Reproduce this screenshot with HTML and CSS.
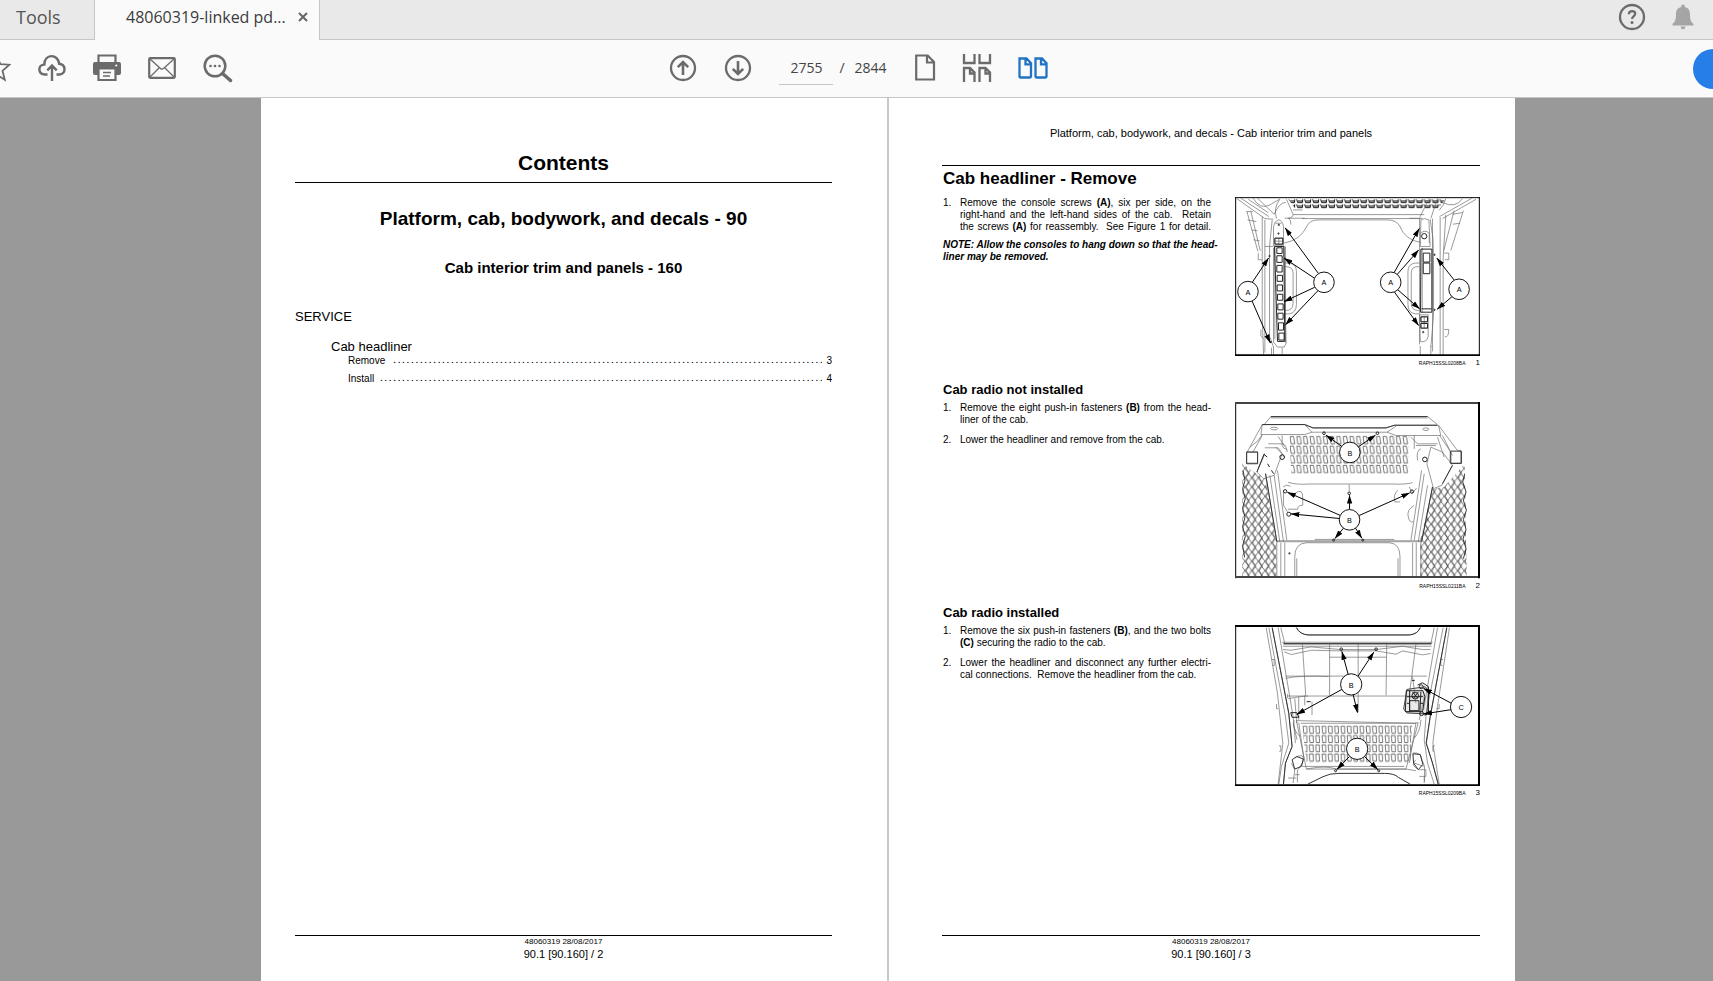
FILE: index.html
```html
<!DOCTYPE html>
<html lang="en">
<head>
<meta charset="utf-8">
<title>48060319-linked pdf</title>
<link rel="stylesheet" href="styles.css">
</head>
<body>
<header class="tabs">
  <button class="tab tools" type="button">Tools</button>
  <div class="tab active"><span>48060319-linked pd...</span>
    <button class="icon close" type="button" aria-label="Close tab"><svg width="10" height="10" viewBox="0 0 10 10"><path d="M1 1l8 8M9 1l-8 8" stroke="#666" stroke-width="2"/></svg></button>
  </div>
  <div class="tab-rest">
    <button class="icon" type="button" aria-label="Help"><svg width="28" height="28" viewBox="0 0 28 28" fill="none" stroke="#6b6b6b"><circle cx="14" cy="14" r="12" stroke-width="2.3"/><path d="M10.800 11.200c.2-4.200 6.500-4 6.400-.4 0 2.300-3 2.300-3.100 5.200" stroke-width="2.300"/><circle cx="14" cy="19.600" r="1.500" fill="#6b6b6b" stroke="none"/></svg></button>
    <button class="icon" type="button" aria-label="Notifications"><svg width="24" height="28" viewBox="0 0 24 28" fill="#a5a5a5"><path d="M10.300 4V2.500q1.700-2 3.400 0V4c4 .9 5.300 3.500 5.300 7.500 0 5 .8 7 3.500 9.500v1.500h-21V21C4.200 18.500 5 16.500 5 11.500 5 7.500 6.300 4.900 10.300 4zM9.500 23.500h5q-.5 2.800-2.500 2.800t-2.500-2.800z"/></svg></button>
  </div>
</header>
<nav class="toolbar" aria-label="Document">
  <div class="group left">
    <button class="icon" type="button" aria-label="Star"><svg width="11" height="30" viewBox="1 0 11 30" fill="none" stroke="#6b6b6b" stroke-width="1.800"><path d="M-2 3l3.300 8.200 9.200.500-7 6 2.300 9.100L-2 21.800"/></svg></button>
    <button class="icon" type="button" aria-label="Upload"><svg width="28" height="30" viewBox="0 0 28 30" fill="none" stroke="#6b6b6b" stroke-width="2.400"><path d="M9.500 21.500H7C-.5 21-.3 11.800 6.300 11.600 6.500.600 20 .400 21.200 10.800c7 .8 7 10.400.3 10.700h-3M14 28V13M9.300 17.300L14 12.500l4.700 4.800"/></svg></button>
    <button class="icon" type="button" aria-label="Print"><svg width="28" height="30" viewBox="0 0 28 30"><path d="M5.500 9V2.500h17V9" fill="none" stroke="#6b6b6b" stroke-width="2.200"/><path d="M2 9h24q2 0 2 2v9q0 2-2 2H2q-2 0-2-2v-9q0-2 2-2z" fill="#6b6b6b"/><circle cx="23.300" cy="12.500" r="1.100" fill="#fff"/><path d="M5.500 15.500h17V27h-17z" fill="#fafafa" stroke="#6b6b6b" stroke-width="2.200"/><path d="M10 19.500h8M10 23h7" stroke="#6b6b6b" stroke-width="1.400"/></svg></button>
    <button class="icon" type="button" aria-label="Email"><svg width="28" height="30" viewBox="0 0 28 30" fill="none" stroke="#6b6b6b"><rect x="1.200" y="5.200" width="25.600" height="19.600" rx="1" stroke-width="2.200"/><path d="M2 6l10.500 9.500q1.500 1.300 3 0L26 6M2 24l9-9M26 24l-9-9" stroke-width="1.300"/></svg></button>
    <button class="icon" type="button" aria-label="Find"><svg width="30" height="30" viewBox="0 0 30 30" fill="none" stroke="#6b6b6b"><circle cx="12" cy="13" r="10.300" stroke-width="2.500"/><path d="M19.500 20.500l8 7" stroke-width="3.500" stroke-linecap="round"/><g fill="#6b6b6b" stroke="none"><circle cx="7.500" cy="13" r="1.300"/><circle cx="12" cy="13" r="1.300"/><circle cx="16.500" cy="13" r="1.300"/></g></svg></button>
  </div>
  <div class="group center">
    <button class="icon" type="button" aria-label="Previous page"><svg width="28" height="30" viewBox="0 0 28 30" fill="none" stroke="#6b6b6b" stroke-width="2.300"><circle cx="14" cy="15" r="12"/><path d="M14 22V9M8.800 14.200L14 9l5.200 5.200" stroke-width="2.600"/></svg></button>
    <button class="icon" type="button" aria-label="Next page"><svg width="28" height="30" viewBox="0 0 28 30" fill="none" stroke="#6b6b6b" stroke-width="2.300"><circle cx="14" cy="15" r="12"/><path d="M14 8v13M8.800 15.800L14 21l5.200-5.200" stroke-width="2.600"/></svg></button>
    <div class="pager"><input type="text" value="2755" aria-label="Page number"><span class="slash">/</span><span>2844</span></div>
    <div class="views">
    <button class="icon" type="button" aria-label="Single page"><svg width="22" height="30" viewBox="0 0 22 30" fill="none" stroke="#6b6b6b" stroke-width="2.200"><path d="M2.200 2.500h11.500l6.300 6.500v17.500H2.200zM13 2.500V9.500h7"/></svg></button>
    <button class="icon" type="button" aria-label="Page scrolling"><svg width="30" height="30" viewBox="0 0 30 30" fill="none" stroke="#6b6b6b" stroke-width="2.300"><path d="M2 1v9h10.500V1M17.500 1v9H28V1M2 29V15h6l4.500 4.500V29M8 15v5.500h4.500M17.500 29V15h6l4.500 4.500V29M23.500 15v5.500H28"/></svg></button>
    <button class="icon" type="button" aria-label="Two page view"><svg width="30" height="30" viewBox="0 0 30 30" fill="none" stroke="#2173c5" stroke-width="2.300"><path d="M1.500 5.500h7l4.500 4.800v13.200q0 1-1 1H2.500q-1 0-1-1zM7.500 5.500v5.800H13M17.500 5.500h6.500l4.500 4.800v13.200q0 1-1 1H18.500q-1 0-1-1zM23 5.500v5.800h5.500"/></svg></button>
    </div>
  </div>
  <div class="group right"><button class="share" type="button" aria-label="Share"></button></div>
</nav>
<main class="viewer">
  <article class="page page-left">
    <h1 class="title">Contents</h1>
    <h2 class="chapter">Platform, cab, bodywork, and decals - 90</h2>
    <h3 class="subchapter">Cab interior trim and panels - 160</h3>
    <p class="service">SERVICE</p>
    <p class="topic">Cab headliner</p>
    <ul class="toc">
      <li><span>Remove</span><span class="dots">. . . . . . . . . . . . . . . . . . . . . . . . . . . . . . . . . . . . . . . . . . . . . . . . . . . . . . . . . . . . . . . . . . . . . . . . . . . . . . . . . . . . . . . . . . . . . . . . .</span><span>3</span></li>
      <li><span>Install</span><span class="dots">. . . . . . . . . . . . . . . . . . . . . . . . . . . . . . . . . . . . . . . . . . . . . . . . . . . . . . . . . . . . . . . . . . . . . . . . . . . . . . . . . . . . . . . . . . . . . . . . . . . .</span><span>4</span></li>
    </ul>
    <footer><small>48060319 28/08/2017</small><span>90.1 [90.160] / 2</span></footer>
  </article>
  <article class="page page-right">
    <p class="running">Platform, cab, bodywork, and decals - Cab interior trim and panels</p>
    <h2 class="heading">Cab headliner - Remove</h2>
    <section class="row">
      <div class="text">
        <ol><li><p><span class="full">Remove the console screws <b>(A)</b>, six per side, on the</span><span class="full">right-hand and the left-hand sides of the cab.&nbsp; Retain</span><span class="full">the screws <b>(A)</b> for reassembly.&nbsp; See Figure 1 for detail.</span></p></li></ol>
        <p class="note">NOTE: Allow the consoles to hang down so that the head-<br>liner may be removed.</p>
      </div>
      <figure>
        <svg class="drawing" viewBox="30 21 738 480">
          <defs>
            <marker id="arrow" markerUnits="userSpaceOnUse" markerWidth="26" markerHeight="18" refX="25" refY="9" orient="auto"><path d="M0 1L26 9 0 17z" fill="#000"/></marker>
            <pattern id="vent" width="24" height="15" patternUnits="userSpaceOnUse" x="190" y="27"><path d="M2 1l3 10h14l1-10M5 6h14" class="dark"/></pattern>
            <pattern id="slots" width="20" height="29" patternUnits="userSpaceOnUse" x="193" y="124"><path d="M3 4h10l4 22H6z" class="mid"/></pattern>
            <pattern id="slots-b" width="19" height="28" patternUnits="userSpaceOnUse" x="232" y="326"><path d="M3 3h11l1 21H5z" class="mid"/></pattern>
            <pattern id="mesh" width="20" height="28" patternUnits="userSpaceOnUse"><path d="M0 0l10 14L20 0M0 28l10-14 10 14M3 0l9 14-9 14" class="mid"/></pattern>
          </defs>
          <path fill="url(#vent)" d="M190 27H665L640 57H212z"/>
          <g class="thin">
            <path d="M36 26L120 86 145 88M48 25L132 80M85 25q20 35 50 20l30-18M70 28l60 40M98 25l50 48q15-35 35-36M165 28q-20 25-10 58M185 28l20 45q0 10-15 12M205 74H600M205 60h28M232 86H590M190 84q10 5 8 20M178 160q50-10 68-50 8-20 35-20h208q28 0 38 20 15 40 62 48"/>
            <path d="M66 65l33 120M78 65l28 118M68 90l26 5M80 120l18 3M86 150l18 3M64 65h20M100 190v20h12M108 420v20l8 8"/>
            <path d="M112 80v305l4 110M120 90v400M142 90l-8 80v270l12 33v22M146 174v284l12 15h20l6-10-6-294M150 170v280M182 170v290M140 475v21M172 475v21M160 90q-12 5-14 20v58h30v-58q-3-20-16-20zM152 100h18M150 145h24v18h-24zM150 154h24M162 145v18M120 170h25"/>
            <path d="M178 220h15q22 3 22 25v100q0 25-22 28h-10M178 231q27-3 27 20v90q0 23-25 22"/>
            <path d="M756 28L655 86M743 25L646 80M715 26q-20 30-60 12M640 25l-20 60M615 26l-28 55M665 26q-5 20-20 35M665 75l-8 130v290M648 82v413M625 86v400M586 85v380M594 174v195M618 88q12 60 10 120v170l-8 95M690 62l-31 120M718 62l-38 120M715 68l-30 5M708 100l-22 3M660 190h14v20h-12M660 420h14q0 25-12 22"/>
            <path d="M585 220h-12q-22 3-22 25v100q0 25 22 28h12M585 231q-24-3-24 20v90q0 23 24 22M590 90q10-8 24 0l4 80h-30zM590 130q12-12 25 0v30M586 376h26v65q-5 20-24 15zM590 382h20v15h-20zM590 402h20v14h-20zM600 382v34M588 470v27M620 470v27M555 85h40M180 85h60"/>
          </g>
          <g class="ink"><path d="M149 170h28l3 286h-22zM156 174h16v17h-16zM156 198h16v20h-16zM156 227h16v20h-16zM157 257h16v18h-16zM157 286h16v18h-16zM158 314h16v18h-16zM159 343h16v18h-16zM159 371h16v18h-16zM161 400h15v22h-15zM162 431h16v21h-16zM590 178h33v190h-34zM597 190h20v27h-20zM597 220h20v32h-20zM592 358h30M590 382h20v15h-20zM590 402h20v14h-20zM150 145h24v18h-24z"/><circle cx="161" cy="131" r="2"/><circle cx="162" cy="105" r="2"/><circle cx="597" cy="428" r="2"/><circle cx="134" cy="199" r="2"/><circle cx="138" cy="458" r="2"/><circle cx="631" cy="195" r="2"/><circle cx="631" cy="361" r="2"/><circle cx="600" cy="139" r="8"/></g>
          <g class="leader"><path d="M82 278L131 205"/><path d="M80 331L136 460"/><path d="M281 251L181 114"/><path d="M270 266L178 205"/><path d="M270 293L178 336"/><path d="M280 303L182 406"/><path d="M509 249L585 116"/><path d="M518 255L583 181"/><path d="M520 300L586 358"/><path d="M510 307L583 408"/><path d="M690 271L638 205"/><path d="M684 321L639 359"/></g>
          <g class="ball"><circle cx="69" cy="306" r="31"/><circle cx="298" cy="278" r="31"/><circle cx="499" cy="278" r="31"/><circle cx="705" cy="299" r="31"/></g>
          <g class="tag"><text x="69" y="315">A</text><text x="298" y="287">A</text><text x="499" y="287">A</text><text x="705" y="308">A</text></g>
          <path class="frame" d="M32 21v480M30 23h738M766 21v480"/><path class="frame heavy" d="M30 498h738"/>
        </svg>
        <figcaption><small>RAPH15SSL0208BA</small><span>1</span></figcaption>
      </figure>
    </section>
    <h3 class="subheading">Cab radio not installed</h3>
    <section class="row">
      <div class="text">
        <ol>
          <li><p><span class="full">Remove the eight push-in fasteners <b>(B)</b> from the head-</span>liner of the cab.</p></li>
          <li><p>Lower the headliner and remove from the cab.</p></li>
        </ol>
      </div>
      <figure>
        <svg class="drawing" viewBox="30 24 738 531">
          <path fill="url(#slots)" d="M193 124H555l-2 116H200z"/>
          <path fill="url(#mesh)" d="M52 210L95 240 122 255 155 450V550H52zM722 210L660 280 625 285 588 440V550H728z"/>
          <g class="thin">
            <path d="M118 92L138 68H610L640 92M138 72H610M112 92H240l25 10H485l25-8H640M112 92L65 178v30h33v-34H65M240 92L262 115H488L515 97M112 92l-4 30H240l22-7M488 115l27 10H650L643 94M643 94L700 170h10v38h-32v-36l-32-48M75 160l25-20 12-18M84 175l28-50M130 150h45q10 5 12 25M120 162h40l20 30M160 128l20 30M172 125v30q2 10 15 12M560 130l20 20h60M575 155h60M590 165q-15 5-10 35M570 125v40M640 130l20 60M655 125l30 60"/>
            <path d="M118 180L96 235l20 20 32-10 24-65-20-20M100 225l20-45M620 160l-12 50 20 75 25-10 32-60-30-40z"/>
            <path d="M122 240L156 445H592L625 280M135 245L165 445M148 245L176 445M158 230L186 440M610 275L582 445M600 240L570 440M592 230L560 440M156 445v105M180 448v102M590 445v105M565 448v102M168 448v102M576 448v102"/>
            <path d="M190 266q25 8 65 5H500q45 2 65-4M374 273v20M175 280q10-10 22-2M176 290v45l12 20M210 300q25-20 24 15v20q-15 0-15 12h-30M520 290q-15 15-8 35h15M570 335q-24 15-18 35 3 18 15 15M555 280l10 18 12-15"/>
            <path d="M210 550v-60q0-40 35-42H495q32 2 32 42v60M216 550v-55M521 550v-55M155 442h435M270 438h240"/>
            <ellipse cx="148" cy="104" rx="11" ry="4"/><ellipse cx="605" cy="106" rx="9" ry="4"/>
          </g>
          <path class="edge" d="M65 175h33v35H65zM680 172h32v37h-32zM112 92H240l25 10H485l25-8H640M138 68H610M122 240L156 445M625 280L592 445M118 180l-22 55M655 270l30-55M54 230l6 30-7 25 8 30-8 28 7 28-7 28 8 30-8 28 6 35M722 240l-6 25 10 30-8 25 9 30-9 28 8 30-9 28 9 30-8 30"/>
          <g class="ink"><circle cx="298" cy="118" r="4"/><circle cx="459" cy="118" r="4"/><circle cx="172" cy="190" r="7"/><circle cx="602" cy="197" r="7"/><circle cx="181" cy="293" r="5"/><circle cx="563" cy="294" r="5"/><circle cx="192" cy="362" r="6"/><circle cx="374" cy="299" r="4"/><circle cx="327" cy="440" r="3"/><circle cx="415" cy="440" r="3"/><circle cx="194" cy="480" r="2"/><path d="M118 182l9 8M128 210l6 10M140 230l6 10"/></g>
          <g class="leader"><path d="M352 158L304 124"/><path d="M403 158L453 124"/><path d="M348 366L188 296"/><path d="M345 375L199 361"/><path d="M375 348V305"/><path d="M404 366L556 298"/><path d="M357 404L331 435"/><path d="M393 404L412 434"/></g>
          <g class="ball"><circle cx="376" cy="176" r="31"/><circle cx="375" cy="379" r="31"/></g>
          <g class="tag"><text x="376" y="186">B</text><text x="375" y="389">B</text></g>
          <path class="frame" d="M32 24v531"/><path class="frame heavy grey" d="M30 27h738M30 551h738"/><path class="frame heavy" d="M765 24v531"/>
        </svg>
        <figcaption><small>RAPH15SSL0211BA</small><span>2</span></figcaption>
      </figure>
    </section>
    <h3 class="subheading">Cab radio installed</h3>
    <section class="row">
      <div class="text">
        <ol>
          <li><p><span class="full">Remove the six push-in fasteners <b>(B)</b>, and the two bolts</span><b>(C)</b> securing the radio to the cab.</p></li>
          <li><p><span class="full">Lower the headliner and disconnect any further electri-</span>cal connections.&nbsp; Remove the headliner from the cab.</p></li>
        </ol>
      </div>
      <figure>
        <svg class="drawing" viewBox="30 24 738 486">
          <path fill="url(#slots-b)" d="M232 326H564l-6 112H246z"/>
          <g class="thin">
            <path d="M132 32L182 300 192 380 170 450 162 503M142 32L192 290 202 390 182 440 176 503M160 32L205 300 212 380M168 32L180 80M124 32L158 230 174 380 160 503M668 32L618 300 606 380 625 440 642 503M657 32L606 290 600 370 610 440 630 503M640 32L598 280M630 32L620 80M676 32L640 270 626 380 645 503"/>
            <path d="M215 32q10 20 35 22H555q25-2 33-22M172 76H625M176 82H622M174 88h448M174 98l25 2 60-10 90 8H455l80-10 60 10h24M178 105l22 8 60-13 88 2H455l60 10 20-10 60 12 24-4M182 178h426M182 185q40-10 130-6M188 238H600M190 246q40-8 60-8M188 232v12"/>
            <path d="M233 82L243 236M315 82V236M401 82V286M487 82L485 236M575 82L555 236M315 121H487M262 255v40M210 245l6 75M222 240v70M240 236v30M565 180l10 80M600 240l-15 70"/>
            <path d="M215 312L570 320 582 318M228 320H575M215 312L245 458H545L582 318M222 318L238 430M575 320L555 440M232 450H540M208 310q-5 30 18 50M205 320l12 50M590 310q-2 35-20 55M245 458q60-12 90 0H545l30 5"/>
            <path d="M210 425q30-20 25 10l-15 25M200 440l10 20-5 40M218 460v38M210 475h15M565 410q25-5 28 20l8 20v45M575 430q-18 15 5 28M585 460h20v20h-20M190 485h25M570 440l30 10M600 480v20"/>
            <path d="M140 128h8v18h-5M155 262v14h5M162 388h6v16h-5M657 128h-7v18h5M645 262v14h-8M632 388h-6v16h4"/>
          </g>
          <path class="edge" d="M215 32q10 20 35 22H555q25-2 33-22M176 80H622M250 503l45-22q20-10 45-10H480q30 0 42 12l35 20M668 32L618 300 606 380 625 440 642 503M142 32L192 290 202 390 182 440 176 503M202 430l14-10 20 8-6 22-20 8zM566 412l22 2 8 30-14 16-14-20z"/>
          <path class="soft" d="M548 218l55-8 10 12-5 70-60-3-10-12z"/>
          <g class="ink"><path d="M546 222h50l6 18-7 45h-52zM556 252h28v30h-28zM556 222v65M590 225l-3 60M565 226l15 18M582 226l-15 20M548 240h48M548 260h8M588 260h10M580 205l15-7 18 12v80l-12 6M198 288h18l6 14h-20zM246 255h12M563 191h8"/><circle cx="591" cy="210" r="6"/><circle cx="592" cy="291" r="6"/><circle cx="350" cy="97" r="4"/><circle cx="455" cy="97" r="4"/><circle cx="333" cy="463" r="3"/><circle cx="463" cy="463" r="3"/><circle cx="573" cy="237" r="10"/></g>
          <g class="leader"><path d="M371 173L352 104"/><path d="M400 179L448 106"/><path d="M352 218L216 293"/><path d="M386 234L399 288"/><path d="M375 420L337 459"/><path d="M420 420L460 459"/><path d="M682 260L598 215"/><path d="M681 279L598 292"/></g>
          <g class="ball"><circle cx="380" cy="203" r="32"/><circle cx="398" cy="397" r="32"/><circle cx="711" cy="271" r="32"/></g>
          <g class="tag"><text x="380" y="213">B</text><text x="398" y="407">B</text><text x="711" y="281">C</text></g>
          <path class="frame" d="M32 24v486"/><path class="frame heavy" d="M30 27h738M30 507h738M765 24v486"/>
        </svg>
        <figcaption><small>RAPH15SSL0209BA</small><span>3</span></figcaption>
      </figure>
    </section>
    <footer><small>48060319 28/08/2017</small><span>90.1 [90.160] / 3</span></footer>
  </article>
</main>
</body>
</html>
```
FILE: styles.css
```css
* { box-sizing: border-box; }
body {
  margin: 0;
  min-height: 100vh;
  display: flex;
  flex-direction: column;
  overflow-x: hidden;
  background: #999;
  color: #000;
  font-family: "Liberation Sans", Arial, sans-serif;
}
h1, h2, h3, p, ul, ol, figure { margin: 0; padding: 0; }
ul, ol { list-style: none; }
svg { display: block; }
button { border: 0; padding: 0; background: none; font: inherit; color: inherit; }

.tabs {
  display: flex;
  height: 40px;
  background: #e9e9e9;
  font-family: "Open Sans", "Noto Sans", sans-serif;
  color: #3c3c3c;
}
.tab { display: flex; align-items: center; font-size: 16px; padding-bottom: 6px; }
.tools {
  width: 95px;
  padding-left: 16px;
  font-size: 18px;
  color: #555;
  border-right: 1px solid #c6c6c6;
  border-bottom: 1px solid #c6c6c6;
}
.active { width: 224px; padding-left: 31px; gap: 12px; background: #fafafa; white-space: nowrap; }
.tab-rest {
  flex: 1;
  display: flex;
  justify-content: flex-end;
  align-items: center;
  gap: 25px;
  padding: 0 18px 6px 0;
  border-left: 1px solid #c6c6c6;
  border-bottom: 1px solid #c6c6c6;
}

.toolbar {
  display: grid;
  grid-template-columns: 1fr auto 1fr;
  height: 58px;
  background: #fafafa;
  border-bottom: 1px solid #c6c6c6;
}
.group { display: flex; align-items: center; padding-bottom: 2px; }
.left { gap: 27px; }
.center { gap: 27px; padding-left: 4px; }
.right { justify-content: flex-end; overflow: hidden; padding-bottom: 0; }
.share { width: 40px; height: 40px; margin-right: -20px; border-radius: 50%; background: #267fe8; }
.pager {
  display: flex;
  align-items: center;
  font: 14px "Open Sans", "Noto Sans", sans-serif;
  color: #444;
}
.slash { padding: 0 10px 0 6px; }
.pager input {
  width: 54px;
  height: 34px;
  padding: 0;
  border: 0;
  border-bottom: 1px solid #c6c6c6;
  background: none;
  font: inherit;
  color: inherit;
  text-align: center;
}
.views { display: flex; gap: 26px; }

.viewer {
  flex: 1;
  display: grid;
  grid-template-columns: repeat(2, minmax(0, 626px));
  justify-content: center;
  padding-left: 63px;
  gap: 2px;
}
.page {
  display: flex;
  flex-direction: column;
  background: #fff;
  padding-bottom: 21px;
}
.page-left { padding-left: 34px; padding-right: 55px; box-shadow: 2px 0 #c8c8c8; }
.page-right { padding-left: 53px; padding-right: 35px; }
.title {
  margin-top: 53px;
  padding-bottom: 7px;
  border-bottom: 1px solid #000;
  font-size: 21px;
  line-height: 24px;
  text-align: center;
}
.chapter { margin-top: 24px; font-size: 19px; line-height: 24px; text-align: center; }
.subchapter { margin-top: 27px; font-size: 15px; line-height: 20px; text-align: center; }
.service { margin-top: 31px; font-size: 13px; line-height: 16px; }
.topic { margin: 14px 0 0 36px; font-size: 13px; line-height: 16px; }
.toc { margin-left: 53px; font-size: 10px; line-height: 12px; }
.toc li { display: flex; justify-content: space-between; gap: 4px; margin-bottom: 6px; }
.dots {
  flex: 1;
  min-width: 0;
  overflow: hidden;
  white-space: nowrap;
  font-size: 8px;
  font-weight: 700;
  text-align: right;
}

.running {
  padding: 27px 0 24px 0;
  border-bottom: 1px solid #000;
  font-size: 11px;
  line-height: 16px;
  text-align: center;
}
.heading { margin: 3px 0 8px; padding-left: 1px; font-size: 17px; line-height: 20px; }
.subheading { margin: 13px 0 4px; padding-left: 1px; font-size: 13px; line-height: 16px; }
.row {
  display: grid;
  grid-template-columns: minmax(0, 268fr) minmax(0, 245fr);
  gap: 24px;
  align-items: start;
  padding-left: 1px;
}
.text { font-size: 10px; line-height: 12px; }
.text ol { counter-reset: step; }
.text li { display: grid; grid-template-columns: 17px minmax(0, 1fr); counter-increment: step; margin-bottom: 8px; }
.text li::before { content: counter(step) "."; }
.full { display: block; text-align: justify; text-align-last: justify; }
.note { margin-top: -2px; font-style: italic; font-weight: 700; white-space: nowrap; }
.drawing { width: 100%; height: auto; }
figcaption {
  display: flex;
  justify-content: flex-end;
  gap: 10px;
  padding-top: 1px;
  font-size: 8px;
  line-height: 12px;
}
figcaption small { font-size: 5px; }
footer {
  margin-top: auto;
  border-top: 1px solid #000;
  display: flex;
  flex-direction: column;
  align-items: center;
  font-size: 11px;
  line-height: 12px;
}
footer small { font-size: 8px; }

.thin { fill: none; stroke: #666; stroke-width: 2; }
.mid { fill: none; stroke: #333; stroke-width: 2; }
.dark { fill: none; stroke: #111; stroke-width: 3; }
.edge { fill: none; stroke: #333; stroke-width: 3; }
.soft { fill: #bbb; fill-opacity: 0.3; stroke: #444; stroke-width: 3; }
.ink { fill: none; stroke: #222; stroke-width: 3; }
.leader { fill: none; stroke: #000; stroke-width: 3; }
.leader path { marker-end: url(#arrow); }
.ball { fill: #fff; stroke: #111; stroke-width: 3; }
.tag { font-size: 22px; text-anchor: middle; }
.frame { fill: none; stroke: #000; stroke-width: 3; }
.heavy { stroke-width: 6; }
.grey { stroke: #444; }
```
